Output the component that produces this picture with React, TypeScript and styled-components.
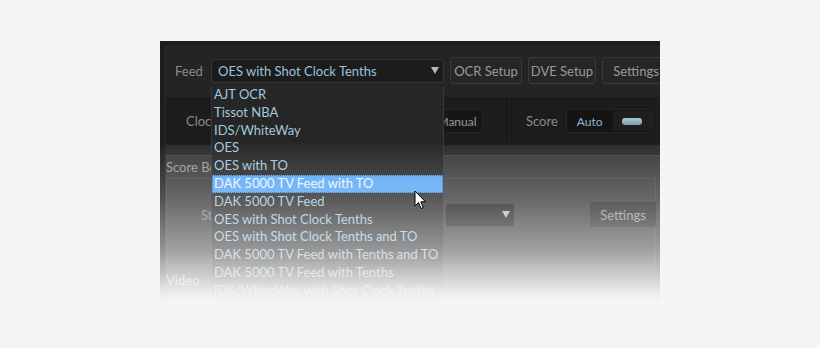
import * as React from "react";
import styled, { createGlobalStyle } from "styled-components";

const GlobalStyle = createGlobalStyle`
  html, body {
    margin: 0;
    padding: 0;
    background: #f5f5f5;
  }
  body {
    font-family: Lato, "Open Sans", "Noto Sans", sans-serif;
  }
`;

const Page = styled.div`
  width: 820px;
  height: 348px;
  padding: 41px 0 0 160px;
  box-sizing: border-box;
  overflow: hidden;
`;

const Window = styled.div`
  position: relative;
  width: 500px;
  height: 262px;
  overflow: hidden;
  background: #1e1e1e;
  padding: 5px 0 0 5px;
  box-sizing: border-box;
  font-size: 13px;
`;

const Frame = styled.div`
  display: flex;
  flex-direction: column;
  border-left: 1px solid #2c2c2c;
  border-top: 1px solid #2c2c2c;
  height: 100%;
`;

const FeedRow = styled.div`
  display: flex;
  align-items: center;
  gap: 6px;
  height: 50px;
  padding: 0 0 3px 9px;
  box-sizing: border-box;
  background: #242424;
  white-space: nowrap;
`;

const Label = styled.span<{ $w?: number }>`
  color: #8a8a8a;
  width: ${(p) => (p.$w ? `${p.$w}px` : "auto")};
  flex-shrink: 0;
`;

const Select = styled.div<{ $w: number }>`
  display: flex;
  align-items: center;
  justify-content: space-between;
  width: ${(p) => p.$w}px;
  height: 24px;
  padding: 0 4px 0 6px;
  box-sizing: border-box;
  background: #1c1c1c;
  border: 1px solid #363636;
  border-radius: 3px;
  color: #9cc2da;
  flex-shrink: 0;
`;

const Arrow = styled.span`
  width: 0;
  height: 0;
  border-left: 4px solid transparent;
  border-right: 4px solid transparent;
  border-top: 7px solid #b8b8b8;
`;

const Button = styled.div<{ $w: number; $dark?: boolean }>`
  display: flex;
  align-items: center;
  justify-content: center;
  width: ${(p) => p.$w}px;
  height: ${(p) => (p.$dark ? 24 : 27)}px;
  box-sizing: border-box;
  background: ${(p) => (p.$dark ? "#161616" : "#262626")};
  border: 1px solid ${(p) => (p.$dark ? "#262626" : "#3a3a3a")};
  border-radius: 3px;
  color: #9a9a9a;
  font-size: ${(p) => (p.$dark ? 12 : 13)}px;
  flex-shrink: 0;
`;

const ClockRow = styled.div`
  display: flex;
  align-items: center;
  height: 48px;
  background: #1c1c1c;
  white-space: nowrap;
`;

const ClockCell = styled.div`
  display: flex;
  align-items: center;
  justify-content: flex-end;
  width: 341px;
  height: 100%;
  padding-right: 23px;
  box-sizing: border-box;
  border-right: 1px solid #141414;
`;

const ClockLabel = styled.span`
  color: #8a8a8a;
  margin: 0 auto 0 20px;
`;

const ScoreCell = styled.div`
  display: flex;
  align-items: center;
  gap: 8px;
  padding-left: 19px;
`;

const Toggle = styled.div`
  display: flex;
  align-items: center;
  width: 86px;
  height: 24px;
  background: #141414;
  border: 1px solid #262626;
  border-radius: 3px;
  box-sizing: border-box;
`;

const ToggleText = styled.span`
  color: #8cb4d2;
  font-size: 12px;
  padding-left: 10px;
  width: 36px;
`;

const KnobWell = styled.span`
  display: flex;
  align-items: center;
  justify-content: center;
  width: 38px;
  height: 20px;
  background: #1e1e1e;
  border-radius: 2px;
`;

const Knob = styled.span`
  width: 20px;
  height: 7px;
  border-radius: 3px;
  background: linear-gradient(#a9c3d3, #7d9db2);
`;

const Spacer = styled.div`
  height: 10px;
  background: #2b2b2b;
`;

const Section = styled.div`
  display: flex;
  flex-direction: column;
  flex: 1;
  background: #3a3a3a;
  border-top: 1px solid #4a4a4a;
  white-space: nowrap;
`;

const SectionTitle = styled.div`
  color: #9a9a9a;
  height: 22px;
  line-height: 22px;
`;

const InnerBox = styled.div`
  display: flex;
  align-items: center;
  height: 88px;
  margin-right: 4px;
  padding: 0 0 15px 34px;
  box-sizing: border-box;
  border: 1px solid #484848;
  border-bottom-color: #555;
`;

const Video = styled.div`
  color: #c8c8c8;
  padding-top: 6px;
`;

const Dropdown = styled.div`
  position: absolute;
  left: 51px;
  top: 45px;
  width: 233px;
  height: 260px;
  box-sizing: border-box;
  background: #262626;
  border: 1px solid #383838;
  border-top: none;
`;

const Item = styled.div<{ $active?: boolean }>`
  height: 17.8px;
  line-height: 17.8px;
  padding-left: 2px;
  box-sizing: border-box;
  color: ${(p) => (p.$active ? "#eef6ff" : "#a2c8de")};
  background: ${(p) => (p.$active ? "#58a8f8" : "transparent")};
  outline: ${(p) => (p.$active ? "1px dotted #2a5a90" : "none")};
  outline-offset: -1px;
  white-space: nowrap;
  overflow: hidden;
`;

const Fade = styled.div`
  position: absolute;
  inset: 0;
  pointer-events: none;
  background: linear-gradient(
    to bottom,
    rgba(245, 245, 245, 0) 0px,
    rgba(245, 245, 245, 0) 100px,
    rgba(245, 245, 245, 0.25) 159px,
    rgba(245, 245, 245, 0.55) 209px,
    rgba(245, 245, 245, 0.93) 249px,
    rgba(245, 245, 245, 1) 260px
  );
`;

const Cursor = styled.svg`
  position: absolute;
  left: 254px;
  top: 149px;
`;

const feeds = [
  "AJT OCR",
  "Tissot NBA",
  "IDS/WhiteWay",
  "OES",
  "OES with TO",
  "DAK 5000 TV Feed with TO",
  "DAK 5000 TV Feed",
  "OES with Shot Clock Tenths",
  "OES with Shot Clock Tenths and TO",
  "DAK 5000 TV Feed with Tenths and TO",
  "DAK 5000 TV Feed with Tenths",
  "IDS/WhiteWay with Shot Clock Tenths",
  "IDS/WhiteWay with Tenths",
];

const App: React.FC = () => {
  return (
    <Page>
      <GlobalStyle />
      <Window>
        <Frame>
          <FeedRow>
            <Label $w={30}>Feed</Label>
            <Select $w={233}>
              OES with Shot Clock Tenths
              <Arrow />
            </Select>
            <Button $w={72}>OCR Setup</Button>
            <Button $w={68}>DVE Setup</Button>
            <Button $w={68}>Settings</Button>
          </FeedRow>
          <ClockRow>
            <ClockCell>
              <ClockLabel>Clock</ClockLabel>
              <Button $w={52} $dark>
                Manual
              </Button>
            </ClockCell>
            <ScoreCell>
              <Label>Score</Label>
              <Toggle>
                <ToggleText>Auto</ToggleText>
                <KnobWell>
                  <Knob />
                </KnobWell>
              </Toggle>
            </ScoreCell>
          </ClockRow>
          <Spacer />
          <Section>
            <SectionTitle>Score Board</SectionTitle>
            <InnerBox>
              <Label $w={244}>Style</Label>
              <Select $w={70}>
                <span />
                <Arrow />
              </Select>
              <Button $w={68} style={{ marginLeft: 74 }}>
                Settings
              </Button>
            </InnerBox>
            <Video>Video</Video>
          </Section>
        </Frame>
        <Dropdown>
          {feeds.map((f) => (
            <Item key={f} $active={f === "DAK 5000 TV Feed with TO"}>
              {f}
            </Item>
          ))}
        </Dropdown>
        <Fade />
        <Cursor width="13" height="20" viewBox="0 0 13 20">
          <path
            d="M1 1 L1 16 L4.5 12.5 L7 18.5 L9.2 17.6 L6.8 11.8 L11.5 11.8 Z"
            fill="#ffffff"
            stroke="#000000"
            strokeWidth="1"
            strokeLinejoin="round"
          />
        </Cursor>
      </Window>
    </Page>
  );
};

export default App;
